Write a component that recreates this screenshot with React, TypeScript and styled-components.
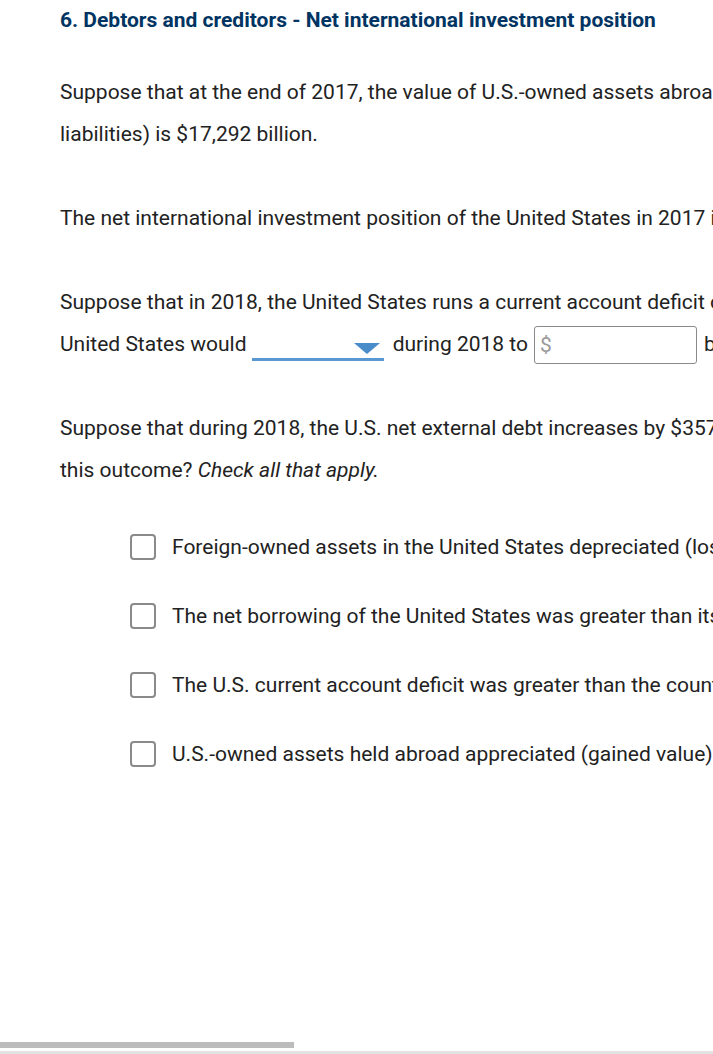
import React from 'react';
import styled, { createGlobalStyle } from 'styled-components';

const GlobalStyle = createGlobalStyle`
  html, body {
    margin: 0;
    padding: 0;
    background: #fff;
    overflow: hidden;
  }
  body {
    font-family: Roboto, "Liberation Sans", Arial, sans-serif;
    color: #222;
  }
`;

const Page = styled.div`
  width: 713px;
  height: 1054px;
  overflow: hidden;
  padding: 8px 0 0 60px;
  box-sizing: border-box;
  white-space: nowrap;
`;

const Title = styled.h1`
  margin: 0 0 39px;
  font-size: 21px;
  line-height: 24px;
  font-weight: 700;
  color: #003462;
`;

const Para = styled.p`
  margin: 0 0 42px;
  font-size: 21px;
  line-height: 42px;
  color: #222;
`;

const Line = styled.span`
  display: block;
`;

const Select = styled.span`
  display: inline-block;
  position: relative;
  width: 132px;
  height: 30px;
  margin: 0 9px 0 0;
  border-bottom: 3px solid #5897cf;
  vertical-align: -10px;
  box-sizing: border-box;
`;

const Caret = styled.span`
  position: absolute;
  right: 4px;
  top: 12px;
  width: 0;
  height: 0;
  border-left: 13px solid transparent;
  border-right: 13px solid transparent;
  border-top: 11px solid #4a8bc9;
`;

const MoneyInput = styled.span`
  display: inline-block;
  width: 163px;
  height: 38px;
  margin: 0 7px 0 6px;
  border: 1px solid #8a8a8a;
  border-radius: 3px;
  box-sizing: border-box;
  padding-left: 5px;
  line-height: 36px;
  color: #9a9a9a;
  vertical-align: middle;
`;

const List = styled.div`
  display: flex;
  flex-direction: column;
  gap: 27px;
  margin-top: -7px;
  padding-left: 70px;
`;

const Option = styled.label`
  display: flex;
  align-items: center;
  gap: 16px;
  height: 42px;
  font-size: 21px;
  color: #222;
`;

const Box = styled.span`
  flex: none;
  width: 26px;
  height: 26px;
  border: 2px solid #8a8a8a;
  border-radius: 4px;
  box-sizing: border-box;
`;

const ScrollTrack = styled.div`
  position: fixed;
  left: 0;
  right: 0;
  bottom: 0;
  height: 9px;
  border-bottom: 3px solid #e2e2e2;
`;

const ScrollThumb = styled.div`
  width: 294px;
  height: 6px;
  background: #bcbcbc;
`;

const options = [
  'Foreign-owned assets in the United States depreciated (lost value).',
  'The net borrowing of the United States was greater than its current account deficit.',
  "The U.S. current account deficit was greater than the country's net borrowing.",
  'U.S.-owned assets held abroad appreciated (gained value).',
];

const App: React.FC = () => {
  return (
    <>
      <GlobalStyle />
      <Page>
        <Title>6. Debtors and creditors - Net international investment position</Title>

        <Para>
          <Line>
            Suppose that at the end of 2017, the value of U.S.-owned assets abroad (U.S. claims) is $13,970
            billion, and the value of foreign-owned assets in the United States (U.S.
          </Line>
          <Line>liabilities) is $17,292 billion.</Line>
        </Para>

        <Para>
          <Line>The net international investment position of the United States in 2017 is</Line>
        </Para>

        <Para>
          <Line>
            Suppose that in 2018, the United States runs a current account deficit of $250 billion. Ignoring
            changes in asset values, the
          </Line>
          <Line>
            United States would{' '}
            <Select>
              <Caret />
            </Select>
            during 2018 to
            <MoneyInput>$</MoneyInput>
            billion.
          </Line>
        </Para>

        <Para>
          <Line>
            Suppose that during 2018, the U.S. net external debt increases by $357 billion. Which of the following
            could explain
          </Line>
          <Line>
            this outcome? <i>Check all that apply.</i>
          </Line>
        </Para>

        <List>
          {options.map((text) => (
            <Option key={text}>
              <Box />
              {text}
            </Option>
          ))}
        </List>
      </Page>
      <ScrollTrack>
        <ScrollThumb />
      </ScrollTrack>
    </>
  );
};

export default App;
